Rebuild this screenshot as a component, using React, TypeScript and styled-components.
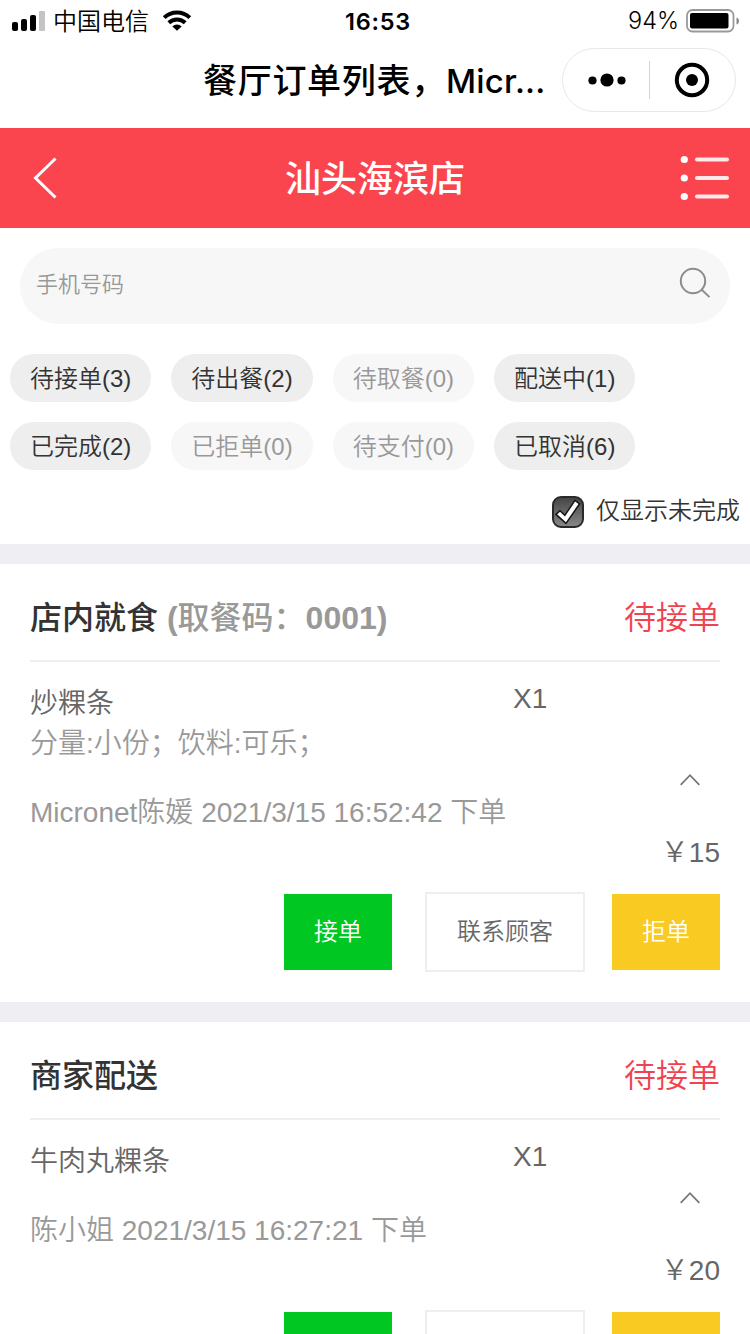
import React from "react";
import styled, { createGlobalStyle } from "styled-components";

const GlobalStyle = createGlobalStyle`
  * { box-sizing: border-box; }
  body {
    margin: 0;
    background: #fff;
    font-family: "Liberation Sans", "Noto Sans CJK SC", sans-serif;
    font-weight: 350;
    color: #333;
  }
`;

const Page = styled.div`
  width: 750px;
  height: 1334px;
  overflow: hidden;
  background: #fff;
`;

/* ---------- system bars ---------- */

const StatusBar = styled.div`
  display: grid;
  grid-template-columns: 1fr auto 1fr;
  align-items: center;
  height: 40px;
  padding: 0 10px 0 12px;
  color: #000;
  font-family: Inter, "Noto Sans CJK SC", sans-serif;
`;

const Carrier = styled.div`
  display: flex;
  align-items: center;
  font-size: 24px;
  line-height: 40px;
  font-weight: 350;
`;

const CarrierName = styled.span`
  margin: 0 13px 0 8px;
  padding-top: 2px;
`;

const Clock = styled.div`
  font-size: 23.5px;
  font-weight: 600;
  letter-spacing: 0.8px;
  line-height: 40px;
  padding: 1px 0 0 4px;
`;

const Power = styled.div`
  display: flex;
  align-items: center;
  justify-content: flex-end;
  gap: 7px;
  font-size: 23.5px;
  font-weight: 300;
  line-height: 40px;
`;

const NavBar = styled.div`
  display: grid;
  grid-template-columns: 188px 1fr 174px;
  align-items: center;
  height: 88px;
  padding: 0 14px 8px 0;
`;

const NavTitle = styled.div`
  grid-column: 2;
  display: flex;
  justify-content: flex-start;
  padding: 2px 0 0 15px;
  color: #000;
  font-family: Inter, "Noto Sans CJK SC", sans-serif;
  font-size: 34px;
  font-weight: 500;
  line-height: 64px;
  letter-spacing: 0.7px;
  white-space: nowrap;
`;

const NavTitleLatin = styled.span`
  font-size: 33px;
  letter-spacing: 0.2px;
`;

const Capsule = styled.div`
  display: flex;
  align-items: center;
  height: 64px;
  border: 1px solid #e8e8e8;
  border-radius: 32px;
`;

const CapsuleHalf = styled.div`
  flex: 1;
  display: flex;
  align-items: center;
  justify-content: center;
`;

const CapsuleRule = styled.div`
  width: 1px;
  height: 38px;
  background: #d4d4d4;
`;

/* ---------- shop header ---------- */

const ShopHeader = styled.header`
  display: flex;
  align-items: center;
  justify-content: space-between;
  height: 100px;
  padding: 0 20px 0 32px;
  background: #fa454e;
`;

const ShopName = styled.h1`
  margin: 0 0 0 12px;
  padding-top: 3px;
  color: #fff;
  font-size: 36px;
  font-weight: 500;
  line-height: 97px;
`;

/* ---------- search and filters ---------- */

const FilterPanel = styled.section`
  height: 316px;
  padding-top: 20px;
`;

const SearchBox = styled.div`
  display: flex;
  align-items: flex-start;
  justify-content: space-between;
  height: 76px;
  margin: 0 20px;
  padding: 18px 18px 0 16px;
  border-radius: 38px;
  background: #f7f7f7;
  color: #999;
  font-size: 22px;
  line-height: 38px;
`;

const ChipGrid = styled.div`
  display: grid;
  grid-template-columns: repeat(4, max-content);
  gap: 20px;
  margin: 30px 10px 0;
`;

const Chip = styled.div<{ $empty: boolean }>`
  height: 48px;
  padding: 0 20px;
  border-radius: 24px;
  background: ${(p) => (p.$empty ? "#f7f7f7" : "#eee")};
  color: ${(p) => (p.$empty ? "#999" : "#333")};
  font-size: 24px;
  line-height: 49px;
`;

const OnlyOpen = styled.div`
  display: flex;
  justify-content: flex-end;
  align-items: center;
  gap: 12px;
  height: 40px;
  margin: 22px 10px 0;
  font-size: 24px;
  line-height: 36px;
`;

const OnlyOpenLabel = styled.span`
  padding-bottom: 2px;
`;

/* ---------- order cards ---------- */

const Card = styled.article`
  padding: 0 30px 30px;
  border-top: 20px solid #efeef3;
`;

const CardHead = styled.div`
  display: flex;
  justify-content: space-between;
  height: 98px;
  padding-top: 11px;
  border-bottom: 2px solid #eee;
  font-size: 32px;
  line-height: 86px;
`;

const OrderType = styled.h2`
  margin: 0;
  font-size: 32px;
  font-weight: 500;
`;

const PickupCode = styled.span`
  color: #999;
`;

const OrderState = styled.span`
  color: #ef4351;
`;

const Item = styled.div`
  display: grid;
  grid-template-columns: 483px 1fr;
  padding-top: 22px;
  color: #666;
  font-size: 28px;
  line-height: 40px;
`;

const Quantity = styled.span`
  line-height: 30px;
`;

const Options = styled.div`
  grid-column: 1 / -1;
  color: #999;
`;

const Collapse = styled.div`
  display: flex;
  justify-content: flex-end;
  height: 29px;
  padding: 8px 19px 0 0;
`;

const Placed = styled.div`
  color: #999;
  font-size: 28px;
  line-height: 40px;
`;

const Price = styled.div`
  color: #666;
  font-size: 28px;
  line-height: 40px;
  text-align: right;
`;

const Actions = styled.div`
  display: flex;
  justify-content: flex-end;
  align-items: center;
  height: 80px;
  margin-top: 19px;
`;

const Action = styled.button<{ $fill?: string }>`
  width: ${(p) => (p.$fill ? 108 : 160)}px;
  height: ${(p) => (p.$fill ? 76 : 80)}px;
  margin: 0 0 0 ${(p) => (p.$fill ? 27 : 33)}px;
  padding: 0;
  border: ${(p) => (p.$fill ? "0" : "2px solid #eee")};
  background: ${(p) => p.$fill ?? "#fff"};
  color: ${(p) => (p.$fill ? "#fff" : "#666")};
  font-family: inherit;
  font-weight: inherit;
  font-size: 24px;
  line-height: 36px;
`;

/* ---------- drawings ---------- */

const SignalIcon = () => (
  <svg width="33" height="20" viewBox="0 0 33 20">
    <rect x="0" y="11" width="6" height="9" rx="2" />
    <rect x="9" y="8" width="6" height="12" rx="2" />
    <rect x="18" y="4" width="6" height="16" rx="2" />
    <rect x="27" y="0" width="6" height="20" rx="1" fill="#c4c4c4" />
  </svg>
);

const WifiIcon = () => (
  <svg width="30" height="22" viewBox="0 0 30 22" fill="none" stroke="#000" strokeWidth="4">
    <path d="M2.2 7.6a18.4 18.4 0 0 1 25.6 0" />
    <path d="M6.8 12.8a11.8 11.8 0 0 1 16.4 0" />
    <path d="M10.4 16.4a6.6 6.6 0 0 1 9.2 0L15 20.8z" fill="#000" stroke="none" />
  </svg>
);

const BatteryIcon = () => (
  <svg width="54" height="24" viewBox="0 0 54 24">
    <rect x="1" y="1" width="46.5" height="21.5" rx="5.5" fill="none" stroke="#999" strokeWidth="1.8" />
    <rect x="4" y="4" width="38.5" height="15.5" rx="2" />
    <path d="M50.5 8.5c3.4 1 3.4 6 0 7z" fill="#888" />
  </svg>
);

const DotsIcon = () => (
  <svg width="40" height="16" viewBox="0 0 40 16">
    <circle cx="6.5" cy="8.5" r="4.1" />
    <circle cx="21" cy="8" r="6.6" />
    <circle cx="35.5" cy="8.5" r="4.1" />
  </svg>
);

const TargetIcon = () => (
  <svg width="36" height="36" viewBox="0 0 36 36">
    <circle cx="18" cy="18" r="15.2" fill="none" stroke="#000" strokeWidth="4" />
    <circle cx="18" cy="18" r="6" />
  </svg>
);

const BackIcon = () => (
  <svg width="26" height="42" viewBox="0 0 26 42" fill="none" stroke="#fff" strokeWidth="3">
    <path d="M23.5 1.5 3.5 21l20 19.5" />
  </svg>
);

const ListIcon = () => (
  <svg width="50" height="46" viewBox="0 0 50 46" fill="#fff">
    {[4.5, 23, 41.5].map((y) => (
      <React.Fragment key={y}>
        <circle cx="4.3" cy={y} r="3.6" />
        <rect x="15" y={y - 2} width="34" height="4" rx="2" fill="#ffe9ea" />
      </React.Fragment>
    ))}
  </svg>
);

const SearchIcon = () => (
  <svg width="34" height="34" viewBox="0 0 34 34" fill="none" stroke="#8c8c8c" strokeWidth="2">
    <circle cx="15" cy="15" r="12.2" />
    <path d="m23.5 23.5 8 7.6" />
  </svg>
);

const CheckboxIcon = () => (
  <svg width="32" height="32" viewBox="0 0 32 32">
    <defs>
      <linearGradient id="box" x1="0" y1="0" x2="0" y2="1">
        <stop offset="0" stopColor="#444" />
        <stop offset="1" stopColor="#888" />
      </linearGradient>
    </defs>
    <rect x="1" y="1" width="30" height="30" rx="8" fill="url(#box)" stroke="#2a2a2a" strokeWidth="2" />
    <path
      d="M4 18.4 8 14.8l4.8 4.6L23 4.4l4.6 3.4L14 27.4z"
      fill="#fff"
      stroke="#151515"
      strokeWidth="1.5"
    />
  </svg>
);

const ChevronUpIcon = () => (
  <svg width="22" height="16" viewBox="0 0 22 16" fill="none" stroke="#777" strokeWidth="1.8">
    <path d="m1.7 12.8 9.3-9.6 9.3 9.6" />
  </svg>
);

/* ---------- content ---------- */

const filters: [string, number][] = [
  ["待接单", 3],
  ["待出餐", 2],
  ["待取餐", 0],
  ["配送中", 1],
  ["已完成", 2],
  ["已拒单", 0],
  ["待支付", 0],
  ["已取消", 6],
];

interface Order {
  type: string;
  code?: string;
  item: string;
  options?: string;
  placed: string;
  price: number;
}

const orders: Order[] = [
  {
    type: "店内就食",
    code: "0001",
    item: "炒粿条",
    options: "分量:小份；饮料:可乐；",
    placed: "Micronet陈媛 2021/3/15 16:52:42 下单",
    price: 15,
  },
  {
    type: "商家配送",
    item: "牛肉丸粿条",
    placed: "陈小姐 2021/3/15 16:27:21 下单",
    price: 20,
  },
];

const OrderCard = ({ order }: { order: Order }) => (
  <Card>
    <CardHead>
      <OrderType>
        {order.type}
        {order.code && (
          <PickupCode>
            {" "}
            <b>(</b>取餐码：<b>{order.code})</b>
          </PickupCode>
        )}
      </OrderType>
      <OrderState>待接单</OrderState>
    </CardHead>
    <Item>
      <span>{order.item}</span>
      <Quantity>X1</Quantity>
      {order.options && <Options>{order.options}</Options>}
    </Item>
    <Collapse>
      <ChevronUpIcon />
    </Collapse>
    <Placed>{order.placed}</Placed>
    <Price>￥{order.price}</Price>
    <Actions>
      <Action $fill="#00c722">接单</Action>
      <Action>联系顾客</Action>
      <Action $fill="#f9ca22">拒单</Action>
    </Actions>
  </Card>
);

export default function App() {
  return (
    <Page lang="zh-CN">
      <GlobalStyle />
      <StatusBar>
        <Carrier>
          <SignalIcon />
          <CarrierName>中国电信</CarrierName>
          <WifiIcon />
        </Carrier>
        <Clock>16:53</Clock>
        <Power>
          94%
          <BatteryIcon />
        </Power>
      </StatusBar>
      <NavBar>
        <NavTitle>
          餐厅订单列表，<NavTitleLatin>Micr...</NavTitleLatin>
        </NavTitle>
        <Capsule>
          <CapsuleHalf>
            <DotsIcon />
          </CapsuleHalf>
          <CapsuleRule />
          <CapsuleHalf>
            <TargetIcon />
          </CapsuleHalf>
        </Capsule>
      </NavBar>
      <ShopHeader>
        <BackIcon />
        <ShopName>汕头海滨店</ShopName>
        <ListIcon />
      </ShopHeader>
      <FilterPanel>
        <SearchBox>
          <span>手机号码</span>
          <SearchIcon />
        </SearchBox>
        <ChipGrid>
          {filters.map(([label, count]) => (
            <Chip key={label} $empty={count === 0}>
              {label}({count})
            </Chip>
          ))}
        </ChipGrid>
        <OnlyOpen>
          <CheckboxIcon />
          <OnlyOpenLabel>仅显示未完成</OnlyOpenLabel>
        </OnlyOpen>
      </FilterPanel>
      {orders.map((order) => (
        <OrderCard key={order.type} order={order} />
      ))}
    </Page>
  );
}
